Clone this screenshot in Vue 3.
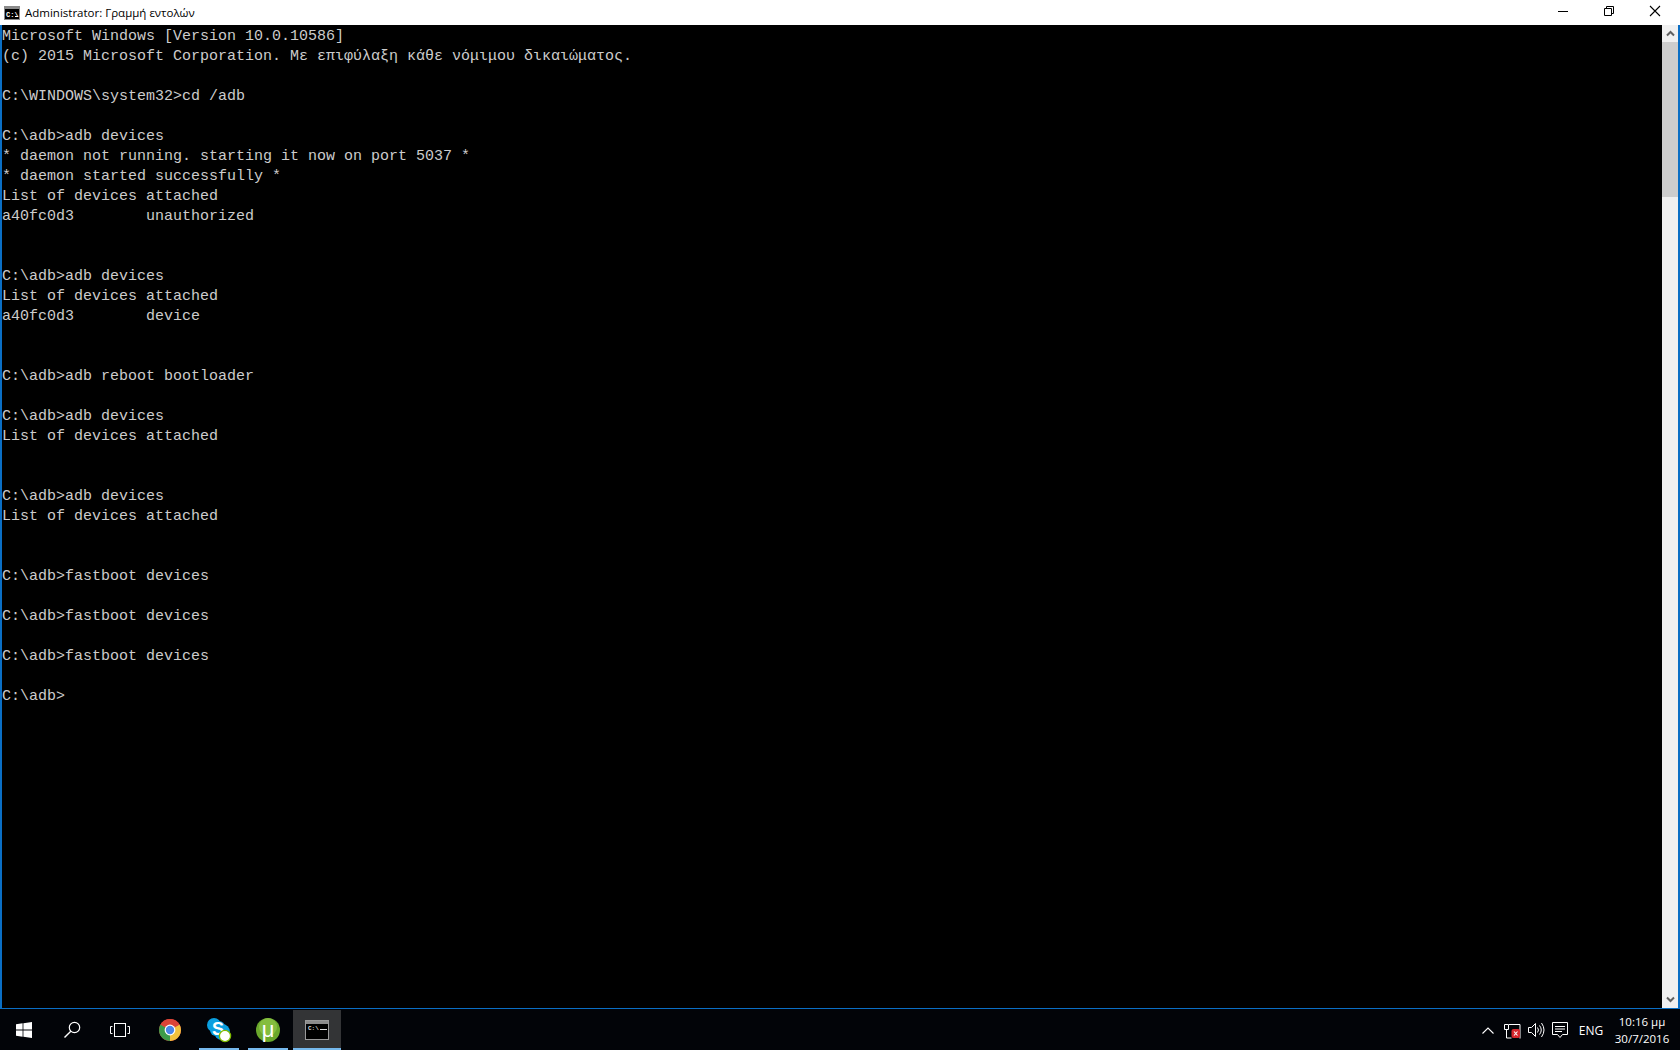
<script setup>
const consoleText = `Microsoft Windows [Version 10.0.10586]
(c) 2015 Microsoft Corporation. Με επιφύλαξη κάθε νόμιμου δικαιώματος.

C:\\WINDOWS\\system32>cd /adb

C:\\adb>adb devices
* daemon not running. starting it now on port 5037 *
* daemon started successfully *
List of devices attached
a40fc0d3        unauthorized


C:\\adb>adb devices
List of devices attached
a40fc0d3        device


C:\\adb>adb reboot bootloader

C:\\adb>adb devices
List of devices attached


C:\\adb>adb devices
List of devices attached


C:\\adb>fastboot devices

C:\\adb>fastboot devices

C:\\adb>fastboot devices

C:\\adb>`
</script>

<template>
  <div class="screen">
    <div class="window">
      <header class="titlebar">
        <svg class="app-icon" width="16" height="16" viewBox="0 0 16 16">
          <rect x="0" y="1" width="16" height="14" fill="#8a8a8a" />
          <rect x="1" y="4" width="14" height="10" fill="#000" />
          <text x="2" y="11.5" font-size="7" font-weight="700" fill="#fff" font-family="Liberation Mono, monospace">C:\</text>
          <rect x="11" y="11" width="3" height="1" fill="#fff" />
        </svg>
        <span class="title">Administrator: Γραμμή εντολών</span>
        <div class="controls">
          <div class="ctl">
            <svg width="12" height="12" viewBox="0 0 12 12"><path d="M1 6.5h10" stroke="#000" fill="none" /></svg>
          </div>
          <div class="ctl">
            <svg width="12" height="12" viewBox="0 0 12 12"><path d="M1.500 3.500h7v7h-7zM3.500 3.500v-2h7v7h-2" stroke="#000" fill="none" /></svg>
          </div>
          <div class="ctl">
            <svg width="12" height="12" viewBox="0 0 12 12"><path d="M1 1l10 10M11 1L1 11" stroke="#000" fill="none" stroke-width="1.1" /></svg>
          </div>
        </div>
      </header>
      <div class="body">
        <pre class="console">{{ consoleText }}</pre>
        <div class="scrollbar">
          <div class="sb-btn">
            <svg width="9" height="7" viewBox="0 0 9 7"><path d="M1 5.500l3.500-3.500L8 5.500" stroke="#606060" stroke-width="2" fill="none" /></svg>
          </div>
          <div class="sb-thumb"></div>
          <div class="sb-track"></div>
          <div class="sb-btn">
            <svg width="9" height="7" viewBox="0 0 9 7"><path d="M1 1.500l3.500 3.500L8 1.500" stroke="#606060" stroke-width="2" fill="none" /></svg>
          </div>
        </div>
      </div>
    </div>

    <footer class="taskbar">
      <div class="tb-sys">
        <svg width="16" height="16" viewBox="0 0 16 16">
          <path d="M0 2.300L6.600 1.300V7.600H0zM7.400 1.200L16 0V7.600H7.400zM0 8.400H6.600V14.700L0 13.700zM7.400 8.400H16V16L7.400 14.800z" fill="#fff" />
        </svg>
      </div>
      <div class="tb-sys">
        <svg width="20" height="20" viewBox="0 0 20 20">
          <circle cx="12.500" cy="7.500" r="5.200" stroke="#fff" stroke-width="1.200" fill="none" />
          <path d="M8.800 11.200L2.500 17.500" stroke="#fff" stroke-width="1.400" fill="none" />
        </svg>
      </div>
      <div class="tb-sys">
        <svg width="20" height="16" viewBox="0 0 20 16">
          <rect x="4.500" y="1.500" width="11" height="13" stroke="#fff" fill="none" />
          <path d="M2.500 4.500H.5v7h2M17.500 4.500h2v7h-2" stroke="#fff" fill="none" />
        </svg>
      </div>

      <div class="apps">
        <div class="app">
          <svg width="24" height="24" viewBox="0 0 24 24">
            <circle cx="12" cy="12" r="11" fill="#db4437" />
            <path d="M12 12L2.500 6.500A11 11 0 0 0 12 23z" fill="#3d9b4a" />
            <path d="M12 12V23A11 11 0 0 0 21.500 6.500z" fill="#f2c23e" />
            <path d="M12 12L2.500 6.500A11 11 0 0 1 21.500 6.500z" fill="#db4437" />
            <circle cx="12" cy="12" r="5.400" fill="#fff" />
            <circle cx="12" cy="12" r="4.200" fill="#4a86e8" />
          </svg>
        </div>
        <div class="app running">
          <svg width="26" height="26" viewBox="0 0 26 26">
            <circle cx="8" cy="8" r="7" fill="#0a9fe0" />
            <circle cx="16" cy="15" r="8" fill="#0a9fe0" />
            <rect x="4" y="4" width="15" height="15" rx="6" fill="#0a9fe0" />
            <text x="12" y="18" text-anchor="middle" font-size="18" font-weight="700" fill="#fff" font-family="Liberation Sans, sans-serif">S</text>
            <circle cx="19" cy="19" r="5.600" fill="#fff" stroke="#7fba00" stroke-width="1.300" />
          </svg>
        </div>
        <div class="app running">
          <svg width="24" height="24" viewBox="0 0 24 24">
            <circle cx="12" cy="12" r="12" fill="#6aa82c" />
            <circle cx="12" cy="9" r="9" fill="#84bd3f" />
            <text x="12" y="19" text-anchor="middle" font-size="22" fill="#fff" font-family="Liberation Sans, sans-serif">μ</text>
          </svg>
        </div>
        <div class="app active">
          <svg width="24" height="20" viewBox="0 0 24 20">
            <rect x="0.500" y="0.500" width="23" height="19" fill="#000" stroke="#9a9a9a" />
            <rect x="1" y="1" width="22" height="3" fill="#8c8c8c" />
            <text x="3" y="10" font-size="6" font-weight="700" fill="#ddd" font-family="Liberation Mono, monospace">C:\</text>
            <rect x="15" y="9" width="7" height="1" fill="#ddd" />
          </svg>
        </div>
      </div>

      <div class="tray">
        <div class="tray-ic">
          <svg width="24" height="24" viewBox="0 0 24 24"><path d="M6.500 15.500L12 10l5.500 5.500" stroke="#fff" stroke-width="1.100" fill="none" /></svg>
        </div>
        <div class="tray-ic">
          <svg width="24" height="24" viewBox="0 0 24 24">
            <path d="M9 6.500h11v14M4.500 6.500h4v5h-4zM6.500 11.500V20" stroke="#fff" fill="none" />
            <path d="M6.500 20h5" stroke="#fff" fill="none" />
            <rect x="11.500" y="11" width="8.500" height="9" rx="2" fill="#d8262c" />
            <path d="M14 13.500l3.500 4M17.500 13.500l-3.500 4" stroke="#fff" stroke-width="1.100" fill="none" />
          </svg>
        </div>
        <div class="tray-ic">
          <svg width="24" height="24" viewBox="0 0 24 24">
            <path d="M4.500 9.500h3l4-4v13l-4-4h-3z" stroke="#fff" fill="none" />
            <path d="M13.500 9.500q2 2.500 0 5M15.500 7.500q3.500 4.500 0 9M17.500 5q5 7 0 14" stroke="#fff" fill="none" />
          </svg>
        </div>
        <div class="tray-ic">
          <svg width="24" height="24" viewBox="0 0 24 24">
            <path d="M4.500 4.500h15v12h-5l-2.500 3-2.500-3h-5zM7 8.500h10M7 11h10M7 13.500h7" stroke="#fff" fill="none" />
          </svg>
        </div>
        <div class="lang">ENG</div>
        <div class="clock">
          <span>10:16 μμ</span>
          <span>30/7/2016</span>
        </div>
      </div>
    </footer>
  </div>
</template>

<style>
html, body { margin: 0; background: #000; overflow: hidden; }
</style>

<style scoped>
.screen {
  width: 1680px;
  height: 1050px;
  display: flex;
  flex-direction: column;
  background: #000;
  overflow: hidden;
}
.window {
  height: 1009px;
  box-sizing: border-box;
  display: flex;
  flex-direction: column;
  border-left: 2px solid #0a6ec4;
  border-right: 2px solid #0a6ec4;
  border-bottom: 1px solid #0a6ec4;
  background: #000;
}
.titlebar {
  height: 25px;
  flex: none;
  display: flex;
  align-items: center;
  background: #fff;
  margin-left: -2px;
  margin-right: -2px;
  padding-left: 4px;
}
.app-icon { flex: none; }
.title {
  margin-left: 5px;
  font: 11.5px/25px "Open Sans", "Noto Sans", sans-serif;
  color: #000;
}
.controls {
  margin-left: auto;
  margin-right: 2px;
  display: flex;
}
.ctl {
  width: 46px;
  height: 25px;
  display: flex;
  align-items: center;
  justify-content: center;
  padding-bottom: 3px;
  box-sizing: border-box;
}
.body {
  flex: 1;
  min-height: 0;
  display: flex;
}
.console {
  flex: 1;
  margin: 0;
  padding: 2px 0 0;
  font: 15px/20px "Liberation Mono", monospace;
  color: #ccc;
  white-space: pre;
  overflow: hidden;
}
.scrollbar {
  width: 16px;
  flex: none;
  display: flex;
  flex-direction: column;
  background: #f0f0f0;
}
.sb-btn {
  height: 17px;
  flex: none;
  display: flex;
  align-items: center;
  justify-content: center;
}
.sb-thumb {
  height: 155px;
  flex: none;
  background: #cdcdcd;
}
.sb-track { flex: 1; }
.taskbar {
  flex: 1;
  display: flex;
  align-items: stretch;
  background: #020408;
  padding-top: 1px;
}
.tb-sys {
  width: 48px;
  display: flex;
  align-items: center;
  justify-content: center;
  flex: none;
}
.apps {
  display: flex;
  gap: 1px;
  margin-left: 2px;
}
.app {
  width: 48px;
  position: relative;
  display: flex;
  align-items: center;
  justify-content: center;
}
.app.running::after {
  content: "";
  position: absolute;
  left: 4px;
  right: 4px;
  bottom: 0;
  height: 2px;
  background: #76b9ed;
}
.app.active { background: #333436; }
.app.active::after {
  content: "";
  position: absolute;
  left: 0;
  right: 0;
  bottom: 0;
  height: 2px;
  background: #76b9ed;
}
.tray {
  margin-left: auto;
  margin-right: 4px;
  display: flex;
  align-items: center;
}
.tray-ic {
  width: 24px;
  height: 24px;
  flex: none;
}
.lang {
  width: 36px;
  padding-left: 2px;
  box-sizing: border-box;
  text-align: center;
  font: 12px "Open Sans", "Noto Sans", sans-serif;
  color: #fff;
}
.clock {
  width: 68px;
  display: flex;
  flex-direction: column;
  align-items: center;
  font: 11.5px/17px "Open Sans", "Noto Sans", sans-serif;
  color: #fff;
}
</style>
